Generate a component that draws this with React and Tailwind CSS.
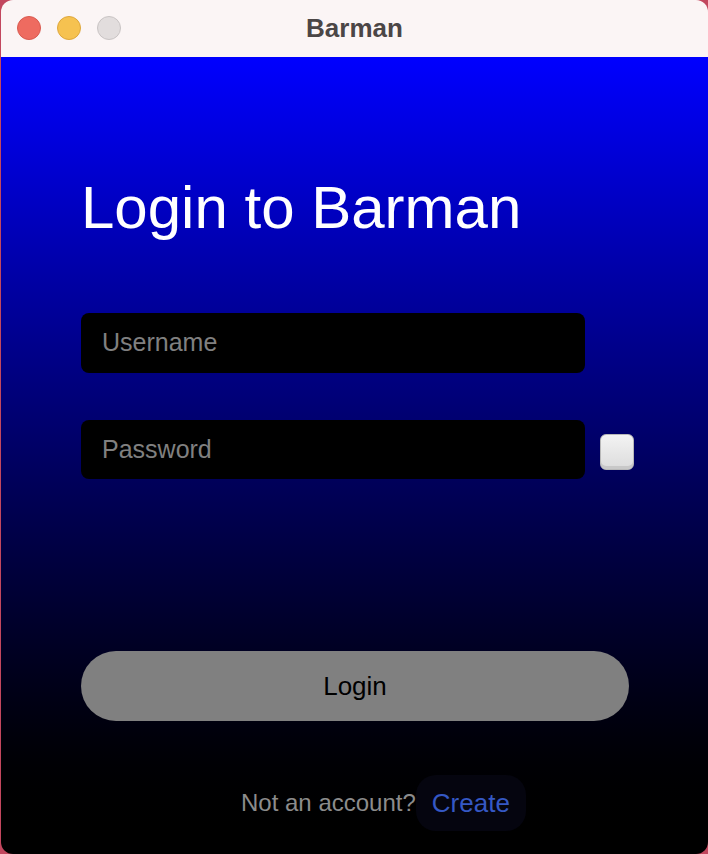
import React from "react";

export default function App() {
  const font = { fontFamily: '"Liberation Sans", Arial, sans-serif' };
  return (
    <div className="w-[708px] h-[854px] bg-[#c2475e] overflow-hidden" style={font}>
      <div className="ml-px w-[707px] h-[854px] rounded-[12px] overflow-hidden flex flex-col">
        <div className="h-[57px] shrink-0 bg-[#fbf5f5] relative flex items-center justify-center">
          <div className="absolute left-[16px] top-[16px] flex gap-[16px]">
            <div className="w-[24px] h-[24px] rounded-full bg-[#ee6b60] border border-[#d95a50]" />
            <div className="w-[24px] h-[24px] rounded-full bg-[#f6c250] border border-[#dea73c]" />
            <div className="w-[24px] h-[24px] rounded-full bg-[#e2dddd] border border-[#c9c4c4]" />
          </div>
          <span className="text-[26px] font-bold text-[#4b4646]">Barman</span>
        </div>
        <div className="flex-1 bg-gradient-to-b from-[#0000ff] to-[#000000] flex flex-col pl-[80px]">
          <h1 className="mt-[121px] text-[60px] leading-none text-white">Login to Barman</h1>
          <div className="mt-[75px] w-[504px] h-[60px] bg-black rounded-[8px] flex items-center pl-[21px]">
            <span className="text-[25px] text-[#808080]">Username</span>
          </div>
          <div className="mt-[47px] flex items-center">
            <div className="w-[504px] h-[59px] bg-black rounded-[8px] flex items-center pl-[21px]">
              <span className="text-[25px] text-[#808080]">Password</span>
            </div>
            <div className="ml-[15px] mt-[4px] w-[34px] h-[36px] rounded-[6px] border border-[#b8b8b8] bg-gradient-to-b from-[#f3f3f3] to-[#dcdcdc] shadow-[inset_0_-3px_0_#c8c8c8]" />
          </div>
          <div className="mt-[172px] w-[548px] h-[70px] rounded-full bg-[#808080] flex items-center justify-center">
            <span className="text-[26px] text-black">Login</span>
          </div>
          <div className="mt-[54px] ml-[160px] flex items-center">
            <span className="text-[24px] text-[#8c8c8c]">Not an account?</span>
            <span className="h-[56px] px-[16px] rounded-[20px] bg-[#05050f] flex items-center text-[26px] text-[#3558c4]">Create</span>
          </div>
        </div>
      </div>
    </div>
  );
}
